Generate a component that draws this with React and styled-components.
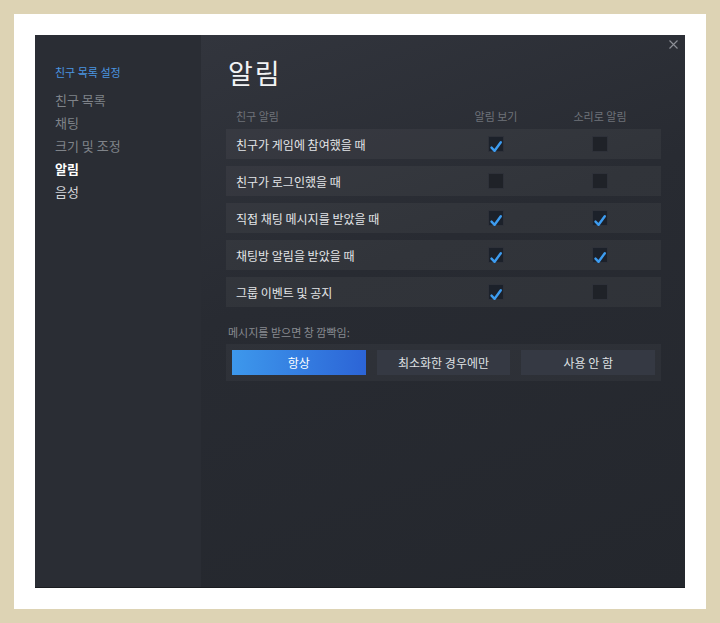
import React from 'react';
import styled, { createGlobalStyle } from 'styled-components';

const GlobalStyle = createGlobalStyle`
  html, body {
    margin: 0;
    padding: 0;
    background: #ddd3b4;
  }
  * {
    box-sizing: border-box;
  }
  body {
    font-family: "Noto Sans CJK KR", "Noto Sans", sans-serif;
  }
`;

const menu = [
  { label: '친구 목록', state: 'dim' },
  { label: '채팅', state: 'dim' },
  { label: '크기 및 조정', state: 'dim' },
  { label: '알림', state: 'active' },
  { label: '음성', state: 'normal' },
];

const rows = [
  { label: '친구가 게임에 참여했을 때', show: true, sound: false },
  { label: '친구가 로그인했을 때', show: false, sound: false },
  { label: '직접 채팅 메시지를 받았을 때', show: true, sound: true },
  { label: '채팅방 알림을 받았을 때', show: true, sound: true },
  { label: '그룹 이벤트 및 공지', show: true, sound: false },
];

const flashOptions = ['항상', '최소화한 경우에만', '사용 안 함'];

function Check({ checked }) {
  return (
    <Box $checked={checked}>
      {checked && (
        <svg width="16" height="16" viewBox="0 0 16 16">
          <path
            d="M3.5 8.6 L6.6 11.8 L12.8 3.2"
            fill="none"
            stroke="#3d9cf0"
            strokeWidth="2.4"
            strokeLinecap="round"
            strokeLinejoin="round"
          />
        </svg>
      )}
    </Box>
  );
}

function App() {
  return (
    <Page>
      <GlobalStyle />
      <Mat>
        <Window>
          <Sidebar>
            <SideTitle>친구 목록 설정</SideTitle>
            <SideList>
              {menu.map((m) => (
                <SideItem key={m.label} $state={m.state}>
                  {m.label}
                </SideItem>
              ))}
            </SideList>
          </Sidebar>
          <Main>
            <Close>
              <svg width="9" height="9" viewBox="0 0 9 9">
                <path d="M0.5 0.5 L8.5 8.5 M8.5 0.5 L0.5 8.5" stroke="#8d9097" strokeWidth="1.1" />
              </svg>
            </Close>
            <Title>알림</Title>
            <Table>
              <HeadRow>
                <HeadCell>친구 알림</HeadCell>
                <HeadCell $center>알림 보기</HeadCell>
                <HeadCell $center>소리로 알림</HeadCell>
              </HeadRow>
              {rows.map((r) => (
                <Row key={r.label}>
                  <RowLabel>{r.label}</RowLabel>
                  <Cell>
                    <Check checked={r.show} />
                  </Cell>
                  <Cell>
                    <Check checked={r.sound} />
                  </Cell>
                </Row>
              ))}
            </Table>
            <FlashLabel>메시지를 받으면 창 깜빡임:</FlashLabel>
            <Segment>
              {flashOptions.map((o, i) => (
                <SegButton key={o} $active={i === 0}>
                  {o}
                </SegButton>
              ))}
            </Segment>
          </Main>
        </Window>
      </Mat>
    </Page>
  );
}

const Page = styled.div`
  width: 720px;
  height: 623px;
  padding: 14px;
  background: #ddd3b4;
`;

const Mat = styled.div`
  height: 100%;
  padding: 21px;
  background: #ffffff;
`;

const Window = styled.div`
  height: 100%;
  display: flex;
  border-bottom: 1px solid #1a1c20;
  overflow: hidden;
`;

const Sidebar = styled.nav`
  width: 166px;
  flex-shrink: 0;
  background: #2a2d34;
  padding: 29px 0 0 20px;
`;

const SideTitle = styled.div`
  font-size: 11px;
  color: #4b95e0;
  line-height: 16px;
  margin-bottom: 11px;
`;

const SideList = styled.ul`
  list-style: none;
  margin: 0;
  padding: 0;
  display: flex;
  flex-direction: column;
  gap: 5px;
`;

const SideItem = styled.li`
  font-size: 13px;
  line-height: 18px;
  color: ${({ $state }) =>
    $state === 'active' ? '#ffffff' : $state === 'normal' ? '#d4d6da' : '#7f8389'};
  font-weight: ${({ $state }) => ($state === 'active' ? 700 : 400)};
`;

const Main = styled.main`
  position: relative;
  flex: 1;
  padding: 18px 24px 0 25px;
  background: linear-gradient(160deg, #32353d 0%, #282b32 40%, #24272d 100%);
`;

const Close = styled.div`
  position: absolute;
  top: 5px;
  right: 7px;
  width: 9px;
  height: 9px;
  display: flex;
`;

const Title = styled.h1`
  margin: 0 0 0 2px;
  font-size: 27px;
  font-weight: 400;
  line-height: 40px;
  letter-spacing: 2px;
  color: #f2f3f5;
`;

const Table = styled.div`
  margin-top: 15px;
  display: flex;
  flex-direction: column;
  gap: 7px;
`;

const grid = `
  display: grid;
  grid-template-columns: 1fr 104px 104px;
  align-items: center;
  padding: 0 9px 0 10px;
`;

const HeadRow = styled.div`
  ${grid}
  height: 16px;
  margin-bottom: -2px;
`;

const HeadCell = styled.div`
  font-size: 11px;
  color: #6f737a;
  text-align: ${({ $center }) => ($center ? 'center' : 'left')};
`;

const Row = styled.div`
  ${grid}
  height: 30px;
  background: rgba(255, 255, 255, 0.045);
`;

const RowLabel = styled.div`
  font-size: 12px;
  color: #e3e5e8;
`;

const Cell = styled.div`
  display: flex;
  justify-content: center;
`;

const Box = styled.div`
  width: 16px;
  height: 16px;
  background: ${({ $checked }) => ($checked ? '#1c212a' : '#1f2228')};
  box-shadow: inset 0 0 0 1px #2e3139;
`;

const FlashLabel = styled.div`
  margin: 17px 0 0 2px;
  font-size: 11px;
  line-height: 16px;
  color: #878a90;
`;

const Segment = styled.div`
  margin-top: 4px;
  padding: 6px;
  display: flex;
  gap: 11px;
  background: rgba(255, 255, 255, 0.035);
`;

const SegButton = styled.button`
  flex: 1;
  height: 25px;
  border: none;
  padding: 0;
  font-family: inherit;
  font-size: 12px;
  color: ${({ $active }) => ($active ? '#ffffff' : '#dfe1e4')};
  background: ${({ $active }) =>
    $active ? 'linear-gradient(90deg, #3d98ec 0%, #2c64d6 100%)' : '#353943'};
  cursor: pointer;
`;

export default App;
